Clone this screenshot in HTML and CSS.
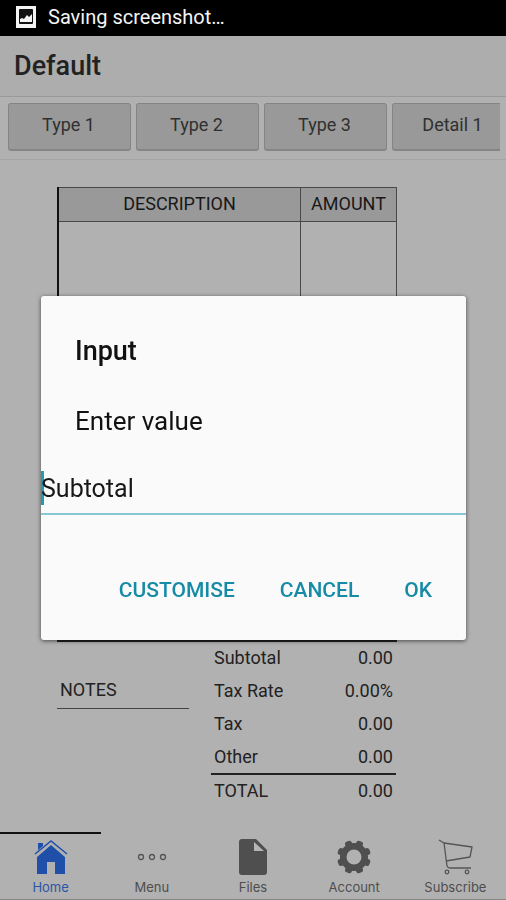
FILE: index.html
```html
<!DOCTYPE html>
<html lang="en">
<head>
<meta charset="utf-8">
<meta name="viewport" content="width=device-width, initial-scale=1">
<title>Default</title>
<link rel="stylesheet" href="styles.css">
</head>
<body>
<div class="status">
  <svg class="status-icon" viewBox="0 0 20 22" aria-hidden="true">
    <rect width="20" height="22" fill="#f4f4f4"/>
    <rect x="3" y="3" width="14" height="15" rx="1" fill="#111"/>
    <path d="M4 16v-3l2-1 2 1 3-4 2 2 3-3v8z" fill="#f4f4f4"/>
  </svg>
  <span>Saving screenshot…</span>
</div>

<header class="title-bar"><h1>Default</h1></header>

<div class="toolbar">
  <div class="type-list">
    <button type="button">Type 1</button>
    <button type="button">Type 2</button>
    <button type="button">Type 3</button>
    <button type="button">Detail 1</button>
  </div>
</div>

<main class="sheet">
  <table class="items">
    <thead><tr><th class="description">DESCRIPTION</th><th>AMOUNT</th></tr></thead>
    <tbody><tr><td></td><td></td></tr></tbody>
  </table>
  <div class="summary">
    <h2 class="notes">NOTES</h2>
    <table class="totals">
      <tbody>
        <tr><th>Subtotal</th><td>0.00</td></tr>
        <tr><th>Tax Rate</th><td>0.00%</td></tr>
        <tr><th>Tax</th><td>0.00</td></tr>
        <tr><th>Other</th><td>0.00</td></tr>
        <tr class="total"><th>TOTAL</th><td>0.00</td></tr>
      </tbody>
    </table>
  </div>
</main>

<nav class="tabs">
  <a href="#home" class="active">
    <svg viewBox="0 0 36 36" aria-hidden="true">
      <path d="M5 4h5v5l-5 5zM18 6 32 18v17H22V23h-8v12H4V18z" fill="#1f4fa8"/>
      <path d="M2 16 18 3l16 13" fill="none" stroke="#b1b1b1" stroke-width="4"/>
      <path d="M2 15 18 2 34 15" fill="none" stroke="#1f4fa8" stroke-width="1.500"/>
    </svg>
    <span>Home</span>
  </a>
  <a href="#menu">
    <svg viewBox="0 0 36 36" fill="none" stroke="#555" stroke-width="1.300" aria-hidden="true">
      <circle cx="7" cy="18" r="2.500"/><circle cx="18" cy="18" r="2.500"/><circle cx="29" cy="18" r="2.500"/>
    </svg>
    <span>Menu</span>
  </a>
  <a href="#files">
    <svg viewBox="0 0 36 36" aria-hidden="true">
      <path d="M7 0h14l11 11v22q0 3-3 3H7q-3 0-3-3V3q0-3 3-3z" fill="#4f4f4f"/>
      <path d="M19 3v9h10z" fill="#b5b5b5"/>
    </svg>
    <span>Files</span>
  </a>
  <a href="#account">
    <svg viewBox="0 0 36 36" aria-hidden="true">
      <g fill="#4f4f4f" transform="rotate(22.500 18 18)">
        <rect x="14.500" y="1" width="7" height="34" rx="2.500"/>
        <rect x="14.500" y="1" width="7" height="34" rx="2.500" transform="rotate(45 18 18)"/>
        <rect x="14.500" y="1" width="7" height="34" rx="2.500" transform="rotate(90 18 18)"/>
        <rect x="14.500" y="1" width="7" height="34" rx="2.500" transform="rotate(135 18 18)"/>
        <circle cx="18" cy="18" r="14"/>
      </g>
      <circle cx="18" cy="18" r="7.500" fill="#b1b1b1"/>
    </svg>
    <span>Account</span>
  </a>
  <a href="#subscribe">
    <svg viewBox="0 0 36 36" fill="none" stroke="#555" stroke-width="1.300" stroke-linejoin="round" aria-hidden="true">
      <path d="M2 1l5 3 3 23q1 2 3 2h21M7 4l28 4-2 10-24 4"/>
      <circle cx="10" cy="33" r="1.800"/><circle cx="30" cy="33" r="1.800"/>
    </svg>
    <span>Subscribe</span>
  </a>
</nav>

<div class="scrim">
  <form class="dialog" role="dialog" aria-labelledby="dialog-title">
    <h2 id="dialog-title">Input</h2>
    <label for="value">Enter value</label>
    <div class="field"><input id="value" type="text" value="Subtotal"></div>
    <div class="actions">
      <button type="button">CUSTOMISE</button>
      <button type="button">CANCEL</button>
      <button type="button">OK</button>
    </div>
  </form>
</div>
</body>
</html>
```
FILE: styles.css
```css
* { box-sizing: border-box; }

body {
  margin: 0;
  min-height: 100vh;
  display: flex;
  flex-direction: column;
  background: #b1b1b1;
  color: #222;
  font-family: Roboto, "Liberation Sans", sans-serif;
  font-size: 18px;
}

h1, h2 { margin: 0; }

button, input { font: inherit; }

.status {
  display: flex;
  align-items: center;
  gap: 12px;
  height: 36px;
  padding: 0 16px 2px;
  background: #000;
  color: #f4f4f4;
  font-size: 20px;
}

.status-icon { width: 20px; height: 22px; }

.title-bar {
  height: 61px;
  padding: 0 14px;
  background: #adadad;
  border-bottom: 1px solid #999;
}

.title-bar h1 {
  font-size: 27px;
  font-weight: 500;
  line-height: 60px;
}

.toolbar {
  height: 63px;
  padding: 6px 6px 0 8px;
  border-bottom: 1px solid #a5a5a5;
}

.type-list {
  display: flex;
  gap: 5px;
  overflow: hidden;
}

.type-list button {
  flex: 0 0 123px;
  height: 48px;
  padding: 0 2px 4px 0;
  border: 1px solid #858585;
  border-bottom-width: 2px;
  border-radius: 3px;
  background: #999;
  color: #303030;
}

.sheet {
  flex: 1;
  padding: 27px 109px 0 57px;
}

.items {
  width: 100%;
  height: 455px;
  border-collapse: collapse;
  border: 1px solid #484848;
  border-left: 2px solid #111;
  border-bottom: 2px solid #222;
}

.items th, .items td {
  padding: 0;
  border-left: 1px solid #484848;
}

.items th {
  width: 96px;
  height: 34px;
  padding-bottom: 2px;
  border-bottom: 1px solid #484848;
  background: #999;
  color: #181818;
  font-weight: 400;
}

.items .description { width: auto; }

.summary {
  display: flex;
  justify-content: space-between;
  align-items: flex-start;
}

.notes {
  width: 132px;
  margin-top: 32px;
  padding: 0 0 2px 3px;
  border-bottom: 1px solid #444;
  font-size: 18px;
  font-weight: 400;
  line-height: 32px;
}

.totals {
  width: 185px;
  margin-right: 1px;
  border-collapse: collapse;
}

.totals th, .totals td {
  height: 33px;
  padding: 0 3px 2px;
  font-weight: 400;
  text-align: left;
}

.totals td { text-align: right; }

.total { border-top: 2px solid #222; }

.tabs {
  display: grid;
  grid-template-columns: repeat(5, 1fr);
  border-bottom: 1px solid #888;
}

.tabs a {
  display: flex;
  flex-direction: column;
  align-items: center;
  gap: 4px;
  padding: 5px 0 4px;
  border-top: 2px solid transparent;
  color: #4e4e4e;
  font-family: Inter, Roboto, sans-serif;
  font-size: 13px;
  line-height: 16px;
  text-decoration: none;
}

.tabs .active {
  border-top-color: #111;
  color: #2c55a5;
}

.tabs svg { width: 36px; height: 36px; }

.scrim {
  position: fixed;
  inset: 36px 0 0;
  display: flex;
  align-items: center;
  padding: 0 40px 0 41px;
}

.dialog {
  display: flex;
  flex-direction: column;
  width: 100%;
  padding: 35px 0 25px;
  border-radius: 3px;
  background: #fafafa;
  box-shadow: 0 1px 4px rgba(0, 0, 0, 0.6);
  color: #111;
}

.dialog h2 {
  padding: 0 34px;
  font-size: 27px;
  font-weight: 500;
  line-height: 40px;
}

.dialog label {
  padding: 30px 34px 22px;
  font-size: 26px;
  line-height: 40px;
}

.field {
  display: flex;
  align-items: center;
  border-bottom: 2px solid #86c8d4;
}

.field::before {
  content: "";
  width: 3px;
  height: 34px;
  margin-right: -3px;
  background: #2599b0;
}

.field input {
  flex: 1;
  min-width: 0;
  height: 50px;
  padding: 0;
  border: 0;
  outline: 0;
  background: transparent;
  color: #181818;
  font-size: 25px;
}

.actions {
  display: flex;
  justify-content: flex-end;
  gap: 45px;
  padding: 50px 34px 0;
}

.actions button {
  padding: 0;
  border: 0;
  background: none;
  color: #168ba6;
  font-size: 21px;
  font-weight: 500;
  line-height: 50px;
}
```
